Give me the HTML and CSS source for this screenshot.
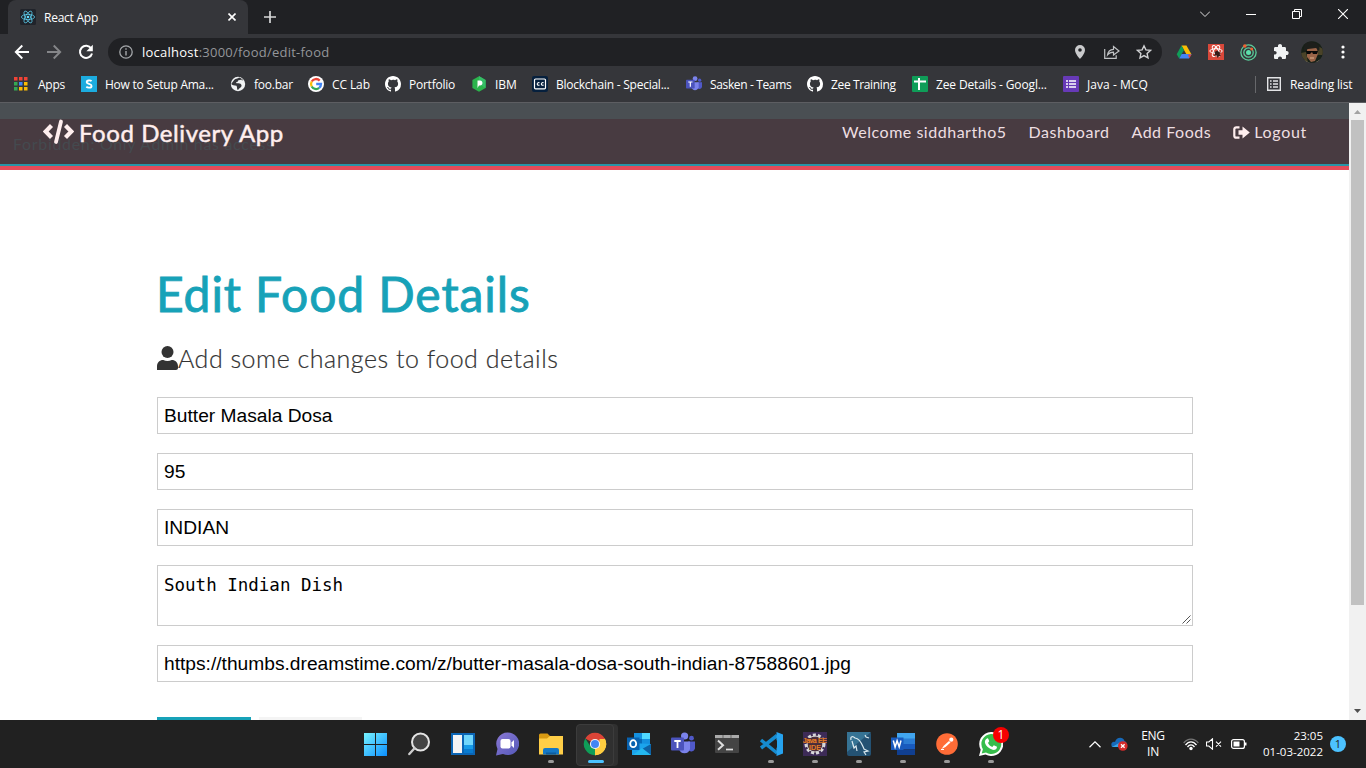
FILE: index.html
```html
<!DOCTYPE html>
<html lang="en">
<head>
<meta charset="utf-8">
<title>React App</title>
<link rel="stylesheet" href="styles.css">
</head>
<body>
<svg class="defs" width="0" height="0">
  <symbol id="github" viewBox="0 0 16 16"><path fill="#fff" d="M8 0C3.58 0 0 3.58 0 8c0 3.54 2.29 6.53 5.47 7.59.4.07.55-.17.55-.38v-1.49c-2.01.37-2.53-.49-2.69-.94-.09-.23-.48-.94-.82-1.13-.28-.15-.68-.52-.01-.53.63-.01 1.08.58 1.23.82.72 1.21 1.87.87 2.33.66.07-.52.28-.87.51-1.07-1.78-.2-3.64-.89-3.64-3.95 0-.87.31-1.59.82-2.15-.08-.2-.36-1.02.08-2.12 0 0 .67-.21 2.2.82A7.6 7.6 0 0 1 8 3.86c.68 0 1.36.09 2 .27 1.53-1.04 2.2-.82 2.2-.82.44 1.1.16 1.92.08 2.12.51.56.82 1.27.82 2.15 0 3.07-1.87 3.75-3.65 3.95.29.25.54.73.54 1.48v2.2c0 .21.15.46.55.38A8 8 0 0 0 16 8c0-4.42-3.58-8-8-8z"/></symbol>
  <symbol id="teams" viewBox="0 0 24 24"><circle cx="20.5" cy="6.2" r="2.4" fill="#5059c9"/><path d="M17 9.5h7v7a3.8 3.8 0 0 1-7 1z" fill="#5059c9"/><circle cx="13.6" cy="4" r="3.6" fill="#7b83eb"/><path d="M8 9.5h11v7.5a5.7 5.7 0 0 1-11 0z" fill="#7b83eb"/><rect x="0" y="5.6" width="13" height="13" rx="1" fill="#4b53bc"/><path d="M3.3 9h6.4M6.5 9v7" stroke="#fff" stroke-width="1.8"/></symbol>
</svg>

<header class="tabstrip">
  <div class="tab">
    <svg width="16" height="16" viewBox="0 0 16 16"><rect width="16" height="16" rx="1.5" fill="#20232a"/><g fill="none" stroke="#61dafb" stroke-width=".7"><ellipse cx="8" cy="8" rx="6.6" ry="2.6"/><ellipse cx="8" cy="8" rx="6.6" ry="2.6" transform="rotate(60 8 8)"/><ellipse cx="8" cy="8" rx="6.6" ry="2.6" transform="rotate(120 8 8)"/></g><circle cx="8" cy="8" r="1.3" fill="#61dafb"/></svg>
    <span class="tab-title">React App</span>
    <svg class="tab-close" width="8" height="8" viewBox="0 0 8 8"><path d="M.5.5l7 7m0-7l-7 7" stroke="#fff" stroke-width="1.6"/></svg>
  </div>
  <svg class="newtab" width="12" height="12" viewBox="0 0 12 12"><path d="M6 0v12M0 6h12" stroke="#d6d7d8" stroke-width="1.7"/></svg>
  <div class="winbtns">
    <svg width="10" height="10" viewBox="0 0 10 10"><path d="M0 2.5l5 5 5-5" fill="none" stroke="#ddd"/></svg>
    <svg width="10" height="10" viewBox="0 0 10 10"><path d="M0 5.5h10" stroke="#fff"/></svg>
    <svg width="10" height="10" viewBox="0 0 10 10"><path d="M.5 2.5h7v7h-7zM2.5 2.5v-2h7v7h-2" fill="none" stroke="#fff"/></svg>
    <svg width="10" height="10" viewBox="0 0 10 10"><path d="M0 0l10 10m0-10L0 10" stroke="#fff" stroke-width="1.1"/></svg>
  </div>
</header>

<div class="toolbar">
  <div class="navbtns">
    <svg width="16" height="16" viewBox="0 0 16 16"><path d="M15 8H2M8.3 1.5L1.8 8l6.5 6.5" fill="none" stroke="#fff" stroke-width="1.9"/></svg>
    <svg width="16" height="16" viewBox="0 0 16 16"><path d="M1 8h13M7.7 1.5L14.2 8l-6.5 6.5" fill="none" stroke="#858689" stroke-width="1.9"/></svg>
    <svg width="16" height="16" viewBox="0 0 16 16"><path d="M13.2 4.5A6.1 6.1 0 1 0 14 9.4" fill="none" stroke="#fff" stroke-width="2"/><path d="M14.8.8v6.4H8.4z" fill="#fff"/></svg>
  </div>
  <div class="omnibox">
    <svg width="14" height="14" viewBox="0 0 14 14"><circle cx="7" cy="7" r="6.2" fill="none" stroke="#a5a8ab" stroke-width="1.3"/><path d="M7 6v4.5M7 3.3v1.5" stroke="#a5a8ab" stroke-width="1.4"/></svg>
    <span class="url"><b>localhost</b>:3000/food/edit-food</span>
    <svg class="pin" width="10" height="14" viewBox="0 0 10 14"><path fill="#c9cacc" fill-rule="evenodd" d="M5 0a5 5 0 0 0-5 5c0 3.7 5 9 5 9s5-5.300 5-9a5 5 0 0 0-5-5zm0 3.200a1.800 1.800 0 1 1 0 3.600 1.800 1.800 0 0 1 0-3.600z"/></svg>
    <svg class="share" width="16" height="14" viewBox="0 0 16 14"><path d="M.7 4v9.300h11.500v-3M3.500 10c.4-3.700 2.300-5.500 6-5.700V1.500L15 6l-5.500 4V7.200C6.500 7.200 5 8 3.500 10z" fill="none" stroke="#c0c2c4" stroke-width="1.200"/></svg>
    <svg width="16" height="16" viewBox="0 0 16 16"><path d="M8 1.800l1.900 4.100 4.500.5-3.300 3 .9 4.400L8 11.600l-4 2.200.9-4.400-3.300-3 4.500-.5z" fill="none" stroke="#d0d1d3" stroke-width="1.400"/></svg>
  </div>
  <div class="exts">
    <svg width="16" height="16" viewBox="0 0 16 16"><path d="M5.500 1.500h5l5 9h-5z" fill="#fbbc04"/><path d="M5.500 1.500L.7 10.300l2.400 4.200L8 6z" fill="#0f9d58"/><path d="M3.200 14.500l2.500-4.400h9.800L13 14.500z" fill="#4285f4"/><path d="M15.500 10.500h-3.300l.9 3.800z" fill="#ea4335"/></svg>
    <svg width="16" height="16" viewBox="0 0 16 16"><path fill="#d9483a" d="M0 0h16v16H0z"/><g fill="none" stroke="#fff"><ellipse cx="8" cy="7" rx="6.200" ry="2.300"/><ellipse cx="8" cy="7" rx="2.300" ry="6" transform="rotate(-30 8 7)"/><ellipse cx="8" cy="7" rx="2.300" ry="6" transform="rotate(30 8 7)"/></g><path d="M6.500 8l3-1.500L11 8l2 .7-1.500 1.300 1.500 1.500-2 .7-1.500 1.800-.8-2.500L6 12l1-2z" fill="#371a17"/></svg>
    <svg width="17" height="17" viewBox="0 0 17 17"><g fill="none" stroke="#5bcf9b" stroke-width="1.300"><circle cx="8.500" cy="8.500" r="7.600"/><circle cx="8.500" cy="8.500" r="4.700"/></g><circle cx="8.500" cy="8.500" r="2.500" fill="#5ce0ab"/><circle cx="4.800" cy="2" r="1.800" fill="#ef6332"/><circle cx="11.700" cy="5" r="1.500" fill="#ef6332"/></svg>
    <svg width="16" height="16" viewBox="0 0 16 16"><path fill="#f1f3f4" d="M1 4.500C1 3.500 1.500 3 2.500 3H5c-.8-4 4.800-4 4 0h2.500c1 0 1.500.5 1.500 1.500V7c3.500-.7 3.500 4.500 0 4v2.500c0 1-.5 1.500-1.500 1.500H9c.3-3.500-4.300-3.500-4 0H2.500C1.500 15 1 14.500 1 13.500v-3c3.500.2 3.500-3.900 0-3.600z"/></svg>
    <svg width="22" height="22" viewBox="0 0 22 22"><clipPath id="face"><circle cx="11" cy="11" r="10.800"/></clipPath><g clip-path="url(#face)"><path fill="#172017" d="M0 0h22v22H0z"/><path d="M0 12l5-1 2 11H0zM17 5l5 3v6h-5z" fill="#4a4328"/><path d="M6 7h10l1 6-3 7-4 1-4-5z" fill="#9a6448"/><path d="M3 10C2 3 6 0 11 1s9 3 7 9l-3-3-8 1z" fill="#1d1f1b"/><path d="M5 10h12l-1 3h-4l-1-2-2 2H6z" fill="#080909"/><path d="M9 17h4" stroke="#e1b18d"/><path d="M3 19l6 3H2zM15 21l5-3v4z" fill="#a5977f"/></g></svg>
    <svg width="4" height="16" viewBox="0 0 4 16"><g fill="#fff"><circle cx="2" cy="3" r="1.600"/><circle cx="2" cy="8" r="1.600"/><circle cx="2" cy="13" r="1.600"/></g></svg>
  </div>
</div>

<nav class="bookmarks">
  <div><svg class="apps" width="14" height="14" viewBox="0 0 14 14"><path fill="#f14336" d="M0 0h3.500v3.500H0zM5 0h3.500v3.500H5zM10 0h3.500v3.500H10z"/><path fill="#34a853" d="M0 5h3.500v3.500H0zM0 10h3.500v3.500H0z"/><path fill="#4285f4" d="M5 5h3.500v3.500H5z"/><path fill="#fbbc04" d="M10 5h3.500v3.500H10zM5 10h3.500v3.500H5zM10 10h3.500v3.500H10z"/></svg><span>Apps</span></div>
  <div><svg width="16" height="16" viewBox="0 0 16 16"><path fill="#1cacdf" d="M0 0h16v16H0z"/><path d="M10.600 5.200C9.500 4.200 5.700 4 5.700 6.200c0 2 4.900 1.300 4.900 3.700 0 2.300-3.800 2.200-5.300.9" fill="none" stroke="#fff" stroke-width="1.800"/></svg><span>How to Setup Ama...</span></div>
  <div><svg width="16" height="16" viewBox="0 0 16 16"><circle cx="8" cy="8" r="7.200" fill="#f1f3f4"/><path d="M3 5.500C5 2 8 3 9 1.500c2 .5 3.500 1.500 4.300 3-2.300-.5-3 .5-4.300.5-1 1-3 .5-3 2 2 .7 5-.3 5.500 2.300.3 2.200-2.500 2.700-3.500 5-1.500-1-.5-3-1.500-4.500C4.500 9 2 9.500 1.200 8z" fill="#35363a"/><path d="M8 4.500l4-1-1 2.500H8z" fill="#f1f3f4"/></svg><span>foo.bar</span></div>
  <div><svg width="16" height="16" viewBox="0 0 16 16"><circle cx="8" cy="8" r="8" fill="#fff"/><g fill="none" stroke-width="2.300"><path d="M11.700 4.600A5 5 0 0 0 3.700 5.500" stroke="#ea4335"/><path d="M3.700 5.500a5 5 0 0 0 0 5" stroke="#fbbc05"/><path d="M3.700 10.500a5 5 0 0 0 7.500 1.400" stroke="#34a853"/><path d="M11.200 11.900C12.600 10.800 13 9.500 13 8H8.200" stroke="#4285f4"/></g></svg><span class="normal">CC Lab</span></div>
  <div><svg width="16" height="16"><use href="#github"/></svg><span>Portfolio</span></div>
  <div><svg width="16" height="16" viewBox="0 0 16 16"><path d="M8 .2l6.600 3.800v8L8 15.800 1.400 12V4z" fill="#2bb44c"/><path d="M8 0l6.600 4v8L8 8z" fill="#35bd66"/><path d="M6.500 12V4.500H9c3.300 0 3.300 5 0 5H8z" fill="#fff"/></svg><span class="normal">IBM</span></div>
  <div><svg width="16" height="16" viewBox="0 0 16 16"><rect width="16" height="16" rx="2" fill="#06203d"/><rect x="2.500" y="3" width="11" height="9.800" rx="1" fill="none" stroke="#fff" stroke-width="1.200"/><path d="M7.500 6.800c-3-1-3 3.300 0 2.300M11.600 6.800c-3-1-3 3.300 0 2.300" fill="none" stroke="#fff" stroke-width="1.100"/></svg><span>Blockchain - Special...</span></div>
  <div><svg width="16" height="16"><use href="#teams"/></svg><span class="tight">Sasken - Teams</span></div>
  <div><svg width="16" height="16"><use href="#github"/></svg><span class="tight">Zee Training</span></div>
  <div><svg width="16" height="16" viewBox="0 0 16 16"><rect width="16" height="16" rx="1" fill="#0f9d58"/><path d="M2 5.500h12M7 2v12" stroke="#fff" stroke-width="2"/></svg><span class="details">Zee Details - Googl...</span></div>
  <div><svg width="16" height="16" viewBox="0 0 16 16"><rect width="16" height="16" rx="1" fill="#673ab7"/><path d="M3 5h2M3 8h2M3 11h2M6 5h7M6 8h7M6 11h7" stroke="#fff" stroke-width="1.700"/></svg><span class="loose">Java - MCQ</span></div>
  <div class="reading"><svg width="14" height="14" viewBox="0 0 14 14"><path d="M.7.7h12.600v12.600H.7zM3 4h1.600M3 7h1.600M3 10h1.600M6 4h5M6 7h5M6 10h5" fill="none" stroke="#e3e4e6" stroke-width="1.400"/></svg><span>Reading list</span></div>
</nav>

<main class="viewport">
  <div class="page">
    <div class="navbar">
      <p class="alert">Forbidden: Only Admin has access</p>
      <a class="brand"><svg width="31" height="26" viewBox="0 0 31 26"><path d="M8.500 6.500L2.700 12.500l5.800 6M22.500 6.500l5.800 6-5.800 6" fill="none" stroke="#ffeeee" stroke-width="4.200"/><path d="M18 2.500l-5 20.500" stroke="#ffeeee" stroke-width="3.800" stroke-linecap="round"/></svg><span>Food Delivery App</span></a>
      <div class="links">
        <a>Welcome siddhartho5</a><a>Dashboard</a><a>Add Foods</a>
        <a class="logout"><svg width="17" height="13" viewBox="0 0 17 13"><path d="M6.500 1.300H3.300a2 2 0 0 0-2 2v6.400a2 2 0 0 0 2 2h3.200" fill="none" stroke="#ffeeee" stroke-width="2.200"/><path d="M5.500 4.300h4V.4l7.300 6.100-7.300 6.100V8.700h-4z" fill="#ffeeee"/></svg><span>Logout</span></a>
      </div>
    </div>
    <div class="divider"></div>
    <section class="container">
      <h1>Edit Food Details</h1>
      <p class="lead"><svg width="21" height="24" viewBox="0 0 21 24"><circle cx="10.500" cy="6" r="6" fill="#333"/><path d="M0 24v-3.500C0 16.500 2.500 14 6.300 14c2.700 1.300 5.700 1.300 8.400 0 3.800 0 6.300 2.500 6.300 6.500V22c0 1.300-.8 2-2 2z" fill="#333"/></svg><span>Add some changes to food details</span></p>
      <form>
        <div class="field">Butter Masala Dosa</div>
        <div class="field">95</div>
        <div class="field">INDIAN</div>
        <div class="field area">South Indian Dish<svg class="grip" width="9" height="9" viewBox="0 0 9 9"><path d="M.5 8.500l8-8M4.500 8.500l4-4" stroke="#555" stroke-width="1"/></svg></div>
        <div class="field last">https://thumbs.dreamstime.com/z/butter-masala-dosa-south-indian-87588601.jpg</div>
        <div class="buttons"><i class="btn"></i><i class="btn light"></i></div>
      </form>
    </section>
  </div>
  <div class="scrollbar">
    <svg width="17" height="17" viewBox="0 0 17 17"><path d="M5 11l3.500-4 3.500 4z" fill="#a3a3a3"/></svg>
    <div class="thumb"></div>
    <svg width="17" height="17" viewBox="0 0 17 17"><path d="M5 6l3.500 4L12 6z" fill="#505050"/></svg>
  </div>
</main>

<footer class="taskbar">
  <div class="dock">
    <div><svg width="24" height="24" viewBox="0 0 24 24"><linearGradient id="win" x2="1" y2="1"><stop stop-color="#77f3ff"/><stop offset="1" stop-color="#0b8fff"/></linearGradient><path fill="url(#win)" d="M1 1h11v11H1zM13 1h11v11H13zM1 13h11v11H1zM13 13h11v11H13z"/></svg></div>
    <div><svg width="24" height="24" viewBox="0 0 24 24"><circle cx="13.500" cy="10" r="8.500" fill="#444" stroke="#e4e4e4" stroke-width="2"/><path d="M7.500 16.300L2.300 22" stroke="#ccc" stroke-width="2.400" stroke-linecap="round"/></svg></div>
    <div><svg width="24" height="24" viewBox="0 0 24 24"><path fill="#0b65b5" d="M0 1h24v22H0z"/><path fill="#f3f3f5" d="M2 3h9v18H2z"/><path fill="#70d6fc" d="M13 3h9v10h-9z"/><path fill="#169be8" d="M13 13h9v8h-9z"/><path fill="#087bd0" d="M13 17h9v4h-9z"/></svg></div>
    <div><svg width="24" height="24" viewBox="0 0 24 24"><linearGradient id="chat" x2="1" y2="1"><stop stop-color="#8c79d5"/><stop offset="1" stop-color="#5358b8"/></linearGradient><path fill="url(#chat)" d="M12.500.500a11.300 11.300 0 1 1-4.500 21.500L1 23.500 2.500 17A11.300 11.300 0 0 1 12.500.500z"/><rect x="5.500" y="7" width="10" height="9.500" rx="2" fill="#fff"/><path d="M16.500 10.500L19 8v8l-2.500-2.500z" fill="#fff"/></svg></div>
    <div class="run"><svg width="24" height="24" viewBox="0 0 24 24"><path fill="#d89a12" d="M0 3q0-1.500 1.500-1.500h7L11 4h10v5H0z"/><path fill="#ffce47" d="M0 6.500h8L11 4h13v18.500H0z"/><path fill="#1478c6" d="M4 22.500V18q0-2 2-2h12q2 0 2 2v4.500z"/><path fill="#0c5c9f" d="M7 20.500h10v2H7z"/></svg></div>
    <div class="run active"><svg width="24" height="24" viewBox="0 0 24 24"><path fill="#db4437" d="M12 12L2.300 6.400A11.200 11.200 0 0 1 21.700 6.400z"/><path fill="#ffcd40" d="M12 12l9.700-5.600A11.200 11.200 0 0 1 12 23.200z"/><path fill="#0f9d58" d="M12 12v11.200A11.200 11.200 0 0 1 2.300 6.400l5.300 8.200z"/><path fill="#db4437" d="M12 7h9.900V6.400H12z"/><path fill="#ffcd40" d="M16.500 7H22a11.200 11.200 0 0 1-10 16.200l4.400-8.500z"/><circle cx="12" cy="12" r="5.100" fill="#f3f3f3"/><circle cx="12" cy="12" r="4" fill="#4285f4"/></svg></div>
    <div><svg width="24" height="24" viewBox="0 0 24 24"><path fill="#1490df" d="M7 1h16v13H7z"/><path fill="#50d9ff" d="M15 1h8v6h-8z"/><path fill="#0669b7" d="M7 7h8v8H7z"/><path fill="#1ba4ed" d="M5 11l19 1v11H5z"/><path fill="#0d63a6" d="M15 17l9-5v11H13z"/><path fill="#24b8ef" d="M6 23l9-7 9 7z"/><path fill="#0862b0" d="M0 5.500h12.500V18H0z"/><ellipse cx="6.200" cy="11.700" rx="3" ry="3.500" fill="none" stroke="#fff" stroke-width="1.800"/></svg></div>
    <div><svg width="24" height="24"><use href="#teams"/></svg></div>
    <div><svg width="24" height="24" viewBox="0 0 24 24"><rect y="3" width="24" height="18" rx="1" fill="#444"/><path d="M0 3h24v3H0z" fill="#aaa"/><path d="M8 3v3M16 3v3" stroke="#666"/><path d="M3 8.500l5 4.700-5 4.500" fill="none" stroke="#ddd" stroke-width="2"/><path d="M11 17.500h7" stroke="#ddd" stroke-width="1.700"/></svg></div>
    <div class="run"><svg width="24" height="24" viewBox="0 0 24 24"><path d="M18 3.500L2 16M2 8l16 13" stroke="#168bcf" stroke-width="3.500"/><path fill="#26a3ef" d="M17.500 0L24 2.500v19L17.500 24z"/><path fill="#212121" d="M18 8v8l-6-4z"/></svg></div>
    <div class="run"><svg width="24" height="24" viewBox="0 0 24 24"><path fill="#3d2b57" d="M0 0h24v24H0z"/><circle cx="12" cy="12" r="9" fill="#4c3040" stroke="#d8d8db" stroke-width="3" stroke-dasharray="3 2"/><circle cx="12" cy="12" r="8" fill="none" stroke="#ccc"/><path fill="#4c2c36" d="M1 6h22v5H1zM6 12h12v6H6z"/><text x="0" y="11" textLength="24" class="ide">Java EE</text><text x="6" y="18" textLength="12" class="ide">IDE</text></svg></div>
    <div class="run"><svg width="24" height="24" viewBox="0 0 24 24"><rect width="24" height="24" rx="2" fill="#245273"/><path fill="#367394" d="M0 0h24L0 20z"/><path d="M4 8c-1-4 2-4 4-2 6 1 7 7 9 11l4 2-4 1 2 3M5 9l2 7 2-2 1 5M18 3l1 2 3 1" fill="none" stroke="#dbe9ef" stroke-width="1.200"/></svg></div>
    <div class="run"><svg width="24" height="24" viewBox="0 0 24 24"><path fill="#41a5ee" d="M6 1h18v6H6z"/><path fill="#2b7cd3" d="M6 6.500h18V12H6z"/><path fill="#185abd" d="M6 12h18v5.500H6z"/><path fill="#103f91" d="M6 17.500h18V23H6z"/><path fill="#185abd" d="M0 5.500h12.500V18H0z"/><path d="M2.300 8.500l1.800 6.500 2-6.300L8.200 15 10 8.500" fill="none" stroke="#fff" stroke-width="1.500"/></svg></div>
    <div class="run"><svg width="24" height="24" viewBox="0 0 24 24"><circle cx="12" cy="12" r="10.800" fill="#ff6c37"/><path d="M6.500 17l2.500-3.500 5-4.500 1.500 1.500-5 4.500z" fill="#fff"/><circle cx="16.300" cy="7.700" r="2.100" fill="#fff"/><path d="M6 17.500h3" stroke="#fff"/></svg></div>
    <div class="run"><svg width="24" height="24" viewBox="0 0 24 24"><path fill="#fff" d="M12 0a12 12 0 1 1-5.500 22.500L0 24l1.700-6.200A12 12 0 0 1 12 0z"/><path fill="#36bd4b" d="M12 2a10 10 0 1 1-5 18.500L2.700 21.500l1.200-4.200A10 10 0 0 1 12 2z"/><path fill="#fff" d="M8 6.500c1-.5 1.300 0 2.200 2.800L9 11c1 2 2.200 3.200 4.300 4l1.500-1.700 3.200 1.500c0 2.700-2.500 3.500-4.500 3C9.500 16.500 7 14 6 11c-.4-2 .5-4 2-4.500z"/></svg><span class="badge">1</span></div>
  </div>
  <div class="tray">
    <svg width="12" height="7" viewBox="0 0 12 7"><path d="M.5 6.200L6 .8l5.500 5.400" fill="none" stroke="#fff" stroke-width="1.200"/></svg>
    <svg class="cloud" width="17" height="14" viewBox="0 0 17 14"><path fill="#1769b8" d="M1 10C-1 6 2 4 4 5c1-5 8-6 9.500-1 2 .5 2.500 3 2 6z"/><path d="M1 10l9-5 5 5z" fill="#3ba7e9"/><circle cx="11.800" cy="9" r="4.800" fill="#d42b2b"/><path d="M10 7.200l3.600 3.600m0-3.600L10 10.800" stroke="#fff" stroke-width="1.300"/></svg>
    <div class="lang"><span>ENG</span><span>IN</span></div>
    <svg class="wifi" width="16" height="13" viewBox="0 0 16 13"><path d="M.7 5C5-.3 11-.3 15.300 5" fill="none" stroke="#777" stroke-width="1.200"/><path d="M2.500 7c3.300-4.300 7.700-4.300 11 0M4.500 9c2-2.800 5-2.800 7 0" fill="none" stroke="#fff" stroke-width="1.300"/><circle cx="8" cy="10.500" r="1.700" fill="#fff"/></svg>
    <svg class="vol" width="16" height="12" viewBox="0 0 16 12"><path d="M.5 4h2.300L6.500.800v10.400L2.800 8H.5zM10 3.700l5 5m0-5l-5 5" fill="none" stroke="#fff" stroke-width="1.100"/></svg>
    <svg class="bat" width="16" height="10" viewBox="0 0 16 10"><rect x=".6" y=".6" width="12.800" height="8.800" rx="2" fill="none" stroke="#fff" stroke-width="1.200"/><path d="M2.500 2.500h6v5h-6zM14 3.500h1.500v3H14z" fill="#fff"/></svg>
    <div class="clock"><span>23:05</span><span>01-03-2022</span></div>
    <span class="count">1</span>
  </div>
</footer>
</body>
</html>
```

FILE: styles.css
```css
* { box-sizing: border-box; }
body { margin: 0; width: 1366px; height: 768px; overflow: hidden; display: flex; flex-direction: column; font-family: "Open Sans", "Noto Sans", sans-serif; font-size: 12px; color: #fff; background: #fff; }
svg { display: block; flex: none; }
.defs { display: none; }
span, a { white-space: nowrap; }

.tabstrip { height: 34px; flex: none; background: #202124; display: flex; align-items: center; padding-left: 8px; }
.tab { width: 240px; height: 34px; background: #35363a; border-radius: 8px 8px 0 0; display: flex; align-items: center; padding: 0 12px; }
.tab-title { margin-left: 8px; letter-spacing: -.25px; }
.tab-close { margin-left: auto; }
.newtab { margin-left: 16px; }
.winbtns { margin-left: auto; display: flex; gap: 36px; padding: 0 18px 6px 0; }

.toolbar { height: 36px; flex: none; background: #35363a; display: flex; align-items: center; }
.navbtns { display: flex; gap: 16px; padding-left: 14px; width: 108px; }
.omnibox { width: 1054px; height: 28px; border-radius: 14px; background: #202124; display: flex; align-items: center; padding: 0 10px 0 11px; }
.url { flex: 1; margin-left: 9px; font-size: 13px; color: #94969a; letter-spacing: .24px; }
.url b { font-weight: 400; color: #fff; }
.pin { margin-right: 19px; }
.share { margin-right: 16px; }
.exts { display: flex; align-items: center; gap: 16px; padding-left: 14px; }
.exts svg:nth-child(5) { margin: 0 2px 0 -4px; }

.bookmarks { height: 33px; flex: none; background: #35363a; border-bottom: 1px solid #5d5e62; padding: 0 0 4px 14px; display: grid; grid-template-columns: 67px 149px 78px 77px 86px 61px 154px 121px 105px 151px 192px auto; align-items: center; }
.bookmarks > div { display: flex; align-items: center; gap: 8px; letter-spacing: -.24px; }
.bookmarks .apps { margin-right: 2px; }
.bookmarks .reading { border-left: 1px solid #67686b; padding-left: 11px; gap: 9px; letter-spacing: -.15px; }
.bookmarks .normal { letter-spacing: -.1px; }
.bookmarks .tight { letter-spacing: -.36px; }
.bookmarks .details { letter-spacing: -.14px; }
.bookmarks .loose { letter-spacing: .05px; }

.viewport { height: 617px; flex: none; display: flex; overflow: hidden; }
.page { width: 1349px; background: #fff; }
.navbar { height: 61px; border-top: 16px solid #4a4f53; background: #483b41; display: flex; justify-content: space-between; position: relative; font-family: Lato, sans-serif; color: #ffeeee; }
.divider { height: 6px; background: #e44b59; border-top: 2px solid #2795a7; }
.alert { position: absolute; left: 13px; top: 15px; margin: 0; font-size: 16px; line-height: 20px; color: #444a4f; letter-spacing: .68px; white-space: nowrap; }
.brand { position: relative; display: flex; align-items: center; gap: 5px; height: 26px; padding-left: 43px; font-size: 24px; letter-spacing: .57px; -webkit-text-stroke: .5px #ffeeee; }
.links { display: flex; gap: 22px; padding-right: 42px; font-size: 16px; line-height: 26px; letter-spacing: .52px; color: #eedfe1; }
.logout { display: flex; align-items: center; gap: 4px; height: 26px; letter-spacing: .7px; }

.container { padding: 93px 156px 0 157px; color: #333; font-family: Lato, sans-serif; }
h1 { margin: 0; font-size: 48px; line-height: 62px; font-weight: 400; color: #17a2b8; letter-spacing: .9px; text-indent: -1px; -webkit-text-stroke: .9px #17a2b8; }
.lead { margin: 16px 0 23px; height: 33px; display: flex; align-items: center; font-size: 25px; font-weight: 300; letter-spacing: .5px; -webkit-text-stroke: .2px #333; }
.field { height: 37px; border: 1px solid #ccc; margin-bottom: 19px; padding: 0 6px; font: 19.2px/35px "Liberation Sans", sans-serif; color: #000; white-space: nowrap; position: relative; }
.area { height: 61px; font: 17.5px/38px "DejaVu Sans Mono", monospace; }
.grip { position: absolute; right: 1px; bottom: 1px; }
.last { margin-bottom: 35px; }
.buttons { display: flex; gap: 8px; }
.btn { height: 40px; width: 94px; background: #17a2b8; }
.light { width: 103px; background: #f4f4f4; }
.scrollbar { width: 17px; background: #f1f1f1; }
.thumb { height: 485px; margin: 0 2px 98px; background: #c1c1c1; }

.taskbar { height: 48px; flex: none; background: #212121; display: flex; padding-left: 353px; position: relative; z-index: 1; }
.dock { display: flex; }
.dock > div { width: 44px; height: 48px; display: flex; align-items: center; justify-content: center; position: relative; }
.run::after { content: ""; position: absolute; left: 19px; top: 40px; width: 6px; height: 3px; border-radius: 2px; background: #999; }
.active::before { content: ""; position: absolute; left: 3px; top: 4px; width: 36px; height: 40px; border: 1px solid #3c3c3c; border-radius: 4px; background: #303030; box-shadow: 4px 0 0 #303030; }
.active svg { position: relative; }
.active::after { left: 15px; width: 16px; background: #4cc2ff; }
.ide { font: 7px "Liberation Sans", sans-serif; fill: #f78b27; stroke: #f78b27; stroke-width: .2px; }
.badge { position: absolute; left: 24px; top: 7px; width: 16px; height: 16px; border-radius: 50%; background: #f60000; font-size: 12px; line-height: 16px; text-align: center; }
.tray { flex: 1; display: flex; align-items: center; padding-left: 76px; }
.cloud { margin-left: 10px; }
.lang { width: 28px; margin-left: 11px; display: flex; flex-direction: column; align-items: center; line-height: 16px; font-size: 12px; letter-spacing: -.3px; }
.wifi { margin-left: 16px; }
.vol { margin-left: 7px; }
.bat { margin-left: 9px; }
.clock { width: 76px; display: flex; flex-direction: column; text-align: right; line-height: 16px; font-size: 11.5px; }
.count { width: 16px; height: 16px; border-radius: 50%; margin-left: 7px; background: #4cc2ff; color: #222; text-align: center; line-height: 16px; font-size: 11px; }
```
